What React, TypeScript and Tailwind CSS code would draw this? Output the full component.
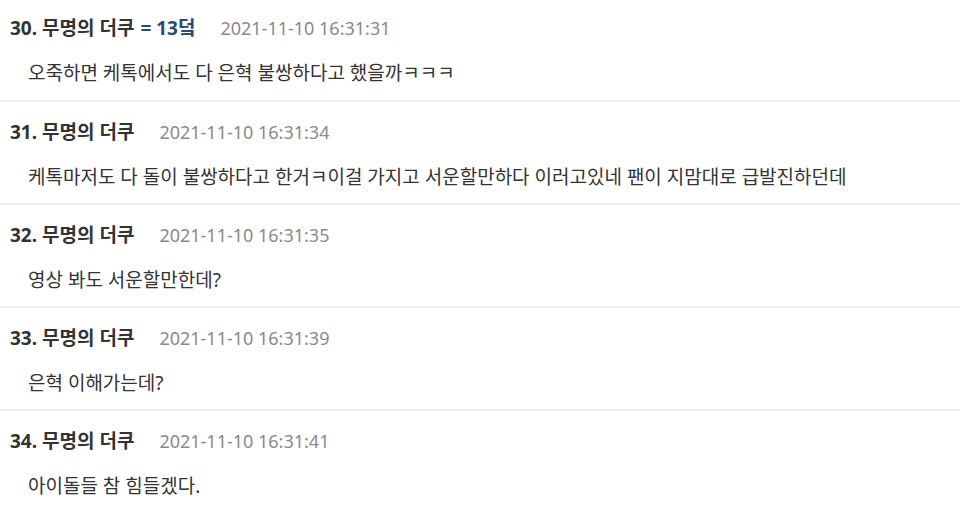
import React from 'react';

type Comment = {
  no: number;
  name: string;
  badge?: string;
  date: string;
  body: string;
};

const comments: Comment[] = [
  { no: 30, name: '무명의 더쿠', badge: '= 13덬', date: '2021-11-10 16:31:31', body: '오죽하면 케톡에서도 다 은혁 불쌍하다고 했을까ㅋㅋㅋ' },
  { no: 31, name: '무명의 더쿠', date: '2021-11-10 16:31:34', body: '케톡마저도 다 돌이 불쌍하다고 한거ㅋ이걸 가지고 서운할만하다 이러고있네 팬이 지맘대로 급발진하던데' },
  { no: 32, name: '무명의 더쿠', date: '2021-11-10 16:31:35', body: '영상 봐도 서운할만한데?' },
  { no: 33, name: '무명의 더쿠', date: '2021-11-10 16:31:39', body: '은혁 이해가는데?' },
  { no: 34, name: '무명의 더쿠', date: '2021-11-10 16:31:41', body: '아이돌들 참 힘들겠다.' },
];

function CommentRow({ c, first }: { c: Comment; first: boolean }) {
  return (
    <div className={`border-b-2 border-[#eeeeee] ${first ? 'pt-[15px] pb-[14px]' : 'pt-[17px] pb-[13px]'}`}>
      <div className="flex items-center h-[26px] pl-[10px]">
        <span className="text-[19px] font-bold text-[#333333]">
          {c.no}. {c.name}
        </span>
        {c.badge && <span className="text-[19px] font-bold text-[#2b4a6f] ml-[6px]">{c.badge}</span>}
        <span className="text-[18px] text-[#8a8a8a] ml-[25px]">{c.date}</span>
      </div>
      <div className="mt-[19px] h-[26px] flex items-center pl-[28px] text-[19px] text-[#333333]">
        {c.body}
      </div>
    </div>
  );
}

export default function App() {
  return (
    <div
      className="w-[960px] h-[505px] overflow-hidden bg-white"
      style={{ fontFamily: '"Noto Sans", "Noto Sans CJK KR", sans-serif' }}
    >
      {comments.map((c, i) => (
        <CommentRow key={c.no} c={c} first={i === 0} />
      ))}
    </div>
  );
}
